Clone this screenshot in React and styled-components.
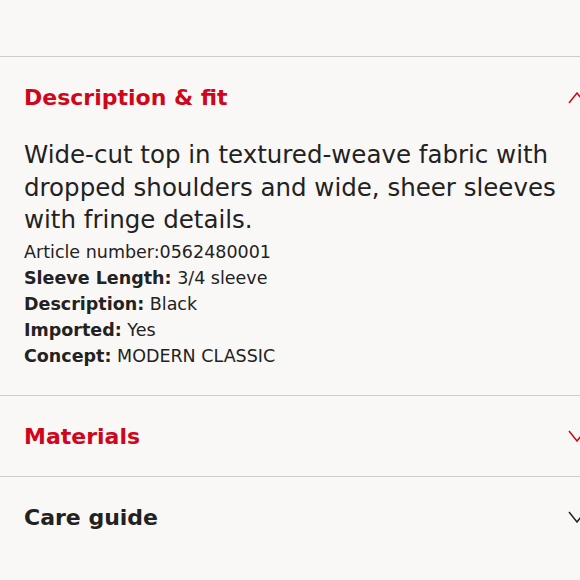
import React from "react";
import styled, { createGlobalStyle } from "styled-components";

const Global = createGlobalStyle`
  html, body {
    margin: 0;
    padding: 0;
    background: #faf8f7;
    overflow: hidden;
  }
  body {
    font-family: "DejaVu Sans", "Open Sans", sans-serif;
    color: #222;
  }
`;

const Page = styled.div`
  width: 600px;
  padding-top: 56px;
`;

const Section = styled.section`
  border-top: 1px solid #cfcdcc;
`;

const Header = styled.div`
  height: 80px;
  display: flex;
  align-items: center;
  justify-content: space-between;
  padding: 1px 12px 0 24px;
  box-sizing: border-box;
`;

const Title = styled.h2`
  margin: 0;
  font-size: 22px;
  font-weight: 700;
  color: ${(p) => (p.$active ? "#d0061b" : "#222")};
`;

const Body = styled.div`
  padding: 2px 24px 26px;
`;

const Lead = styled.p`
  margin: 0;
  font-size: 24.5px;
  line-height: 32.5px;
  width: 545px;
`;

const Details = styled.ul`
  list-style: none;
  margin: 2px 0 0;
  padding: 0;
  font-size: 17.5px;
  line-height: 26px;
`;

const Label = styled.b`
  font-weight: 700;
`;

function Chevron({ up, color }) {
  return (
    <svg width="20" height="12" viewBox="0 0 20 12" fill="none">
      <path
        d={up ? "M1 11 L9 1 L17 11" : "M1 1 L9 11 L17 1"}
        stroke={color}
        strokeWidth="1.5"
      />
    </svg>
  );
}

const details = [
  ["Sleeve Length", "3/4 sleeve"],
  ["Description", "Black"],
  ["Imported", "Yes"],
  ["Concept", "MODERN CLASSIC"],
];

export default function App() {
  return (
    <Page>
      <Global />
      <Section>
        <Header>
          <Title $active>Description &amp; fit</Title>
          <Chevron up color="#d0061b" />
        </Header>
        <Body>
          <Lead>
            Wide-cut top in textured-weave fabric with dropped shoulders and
            wide, sheer sleeves with fringe details.
          </Lead>
          <Details>
            <li>Article number:0562480001</li>
            {details.map(([k, v]) => (
              <li key={k}>
                <Label>{k}:</Label> {v}
              </li>
            ))}
          </Details>
        </Body>
      </Section>
      <Section>
        <Header>
          <Title $active>Materials</Title>
          <Chevron color="#d0061b" />
        </Header>
      </Section>
      <Section>
        <Header>
          <Title>Care guide</Title>
          <Chevron color="#222" />
        </Header>
      </Section>
    </Page>
  );
}
